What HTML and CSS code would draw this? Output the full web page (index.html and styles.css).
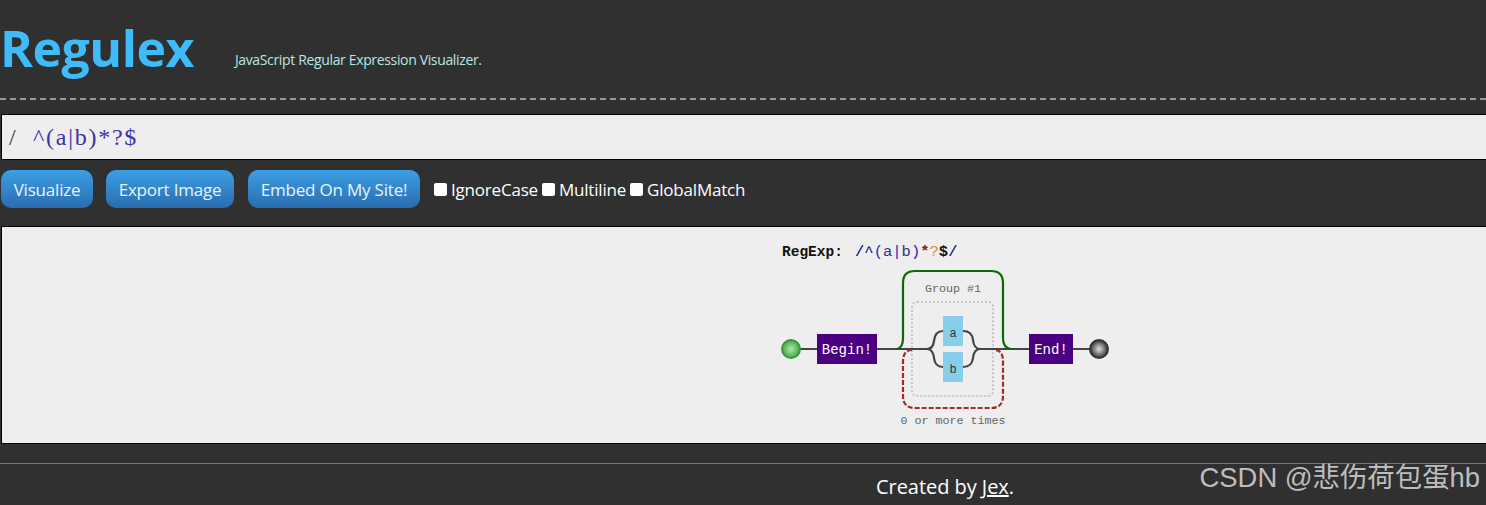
FILE: index.html
```html
<!DOCTYPE html>
<html lang="en">
<head>
<meta charset="utf-8">
<title>Regulex</title>
<link rel="stylesheet" href="styles.css">
</head>
<body>
<header class="header">
  <h1 class="logo">Regulex</h1>
  <span class="tagline">JavaScript Regular Expression Visualizer.</span>
</header>
<div class="input-box"><span class="slash">/</span><span class="regex">^(a|b)*?$</span></div>
<div class="toolbar">
  <button class="btn btn-viz">Visualize</button>
  <button class="btn btn-export">Export Image</button>
  <button class="btn btn-embed">Embed On My Site!</button>
  <label class="opt"><span class="check"></span>IgnoreCase</label>
  <label class="opt"><span class="check"></span>Multiline</label>
  <label class="opt"><span class="check"></span>GlobalMatch</label>
</div>
<main class="canvas">
  <svg class="diagram" width="340" height="217" viewBox="0 0 340 217">
    <defs>
      <radialGradient id="gs"><stop offset="0" stop-color="#b5e6b5"/><stop offset="1" stop-color="#3fa83f"/></radialGradient>
      <radialGradient id="ge"><stop offset="0" stop-color="#e0e0e0"/><stop offset="1" stop-color="#333"/></radialGradient>
    </defs>
    <text class="rx rx-label" x="7" y="30">RegExp:</text>
    <text class="rx rx-src" x="80" y="30"><tspan fill="#000080">/</tspan><tspan fill="#000080">^</tspan><tspan fill="#2a2aaa">(</tspan><tspan fill="#333380">a</tspan><tspan fill="#2a2aaa">|</tspan><tspan fill="#333380">b</tspan><tspan fill="#2a2aaa">)</tspan><tspan fill="#8b1a1a" font-weight="bold">*</tspan><tspan fill="#d98a3c">?</tspan><tspan fill="#111" font-weight="bold">$</tspan><tspan fill="#000080">/</tspan></text>

    <rect class="group-box" x="137" y="76" width="81" height="94" rx="5"/>
    <path class="wire" d="M16 123 H152 M205 123 H323"/>
    <path class="wire" d="M152 123 Q158 123 159 115 Q160 105 168 105 M152 123 Q158 123 159 132 Q160 141 168 141 M188 105 Q197 105 198 114 Q199 123 205 123 M188 141 Q197 141 198 132 Q199 123 205 123"/>
    <path class="loop-top" d="M122 123 Q128 122 128 112 V57 Q128 45 140 45 H216 Q228 45 228 57 V112 Q228 122 236 123"/>
    <path class="loop-bot" d="M137 124 Q128 124 128 136 V170 Q128 182 140 182 H216 Q228 182 228 170 V136 Q228 124 220 124"/>

    <circle cx="16" cy="123" r="9" fill="url(#gs)" stroke="#3a9a3a" stroke-width="2"/>
    <rect class="anchor" x="42" y="108" width="60" height="30"/>
    <text class="node-text" x="72" y="128">Begin!</text>
    <rect class="anchor" x="254" y="108" width="44" height="30"/>
    <text class="node-text" x="276" y="128">End!</text>
    <circle cx="324" cy="123" r="9" fill="url(#ge)" stroke="#333" stroke-width="2"/>

    <rect class="char" x="168" y="90" width="20" height="30"/>
    <text class="char-text" x="178" y="111">a</text>
    <rect class="char" x="168" y="126" width="20" height="30"/>
    <text class="char-text" x="178" y="147">b</text>

    <text class="note" x="178" y="66">Group #1</text>
    <text class="note" x="178" y="198">0 or more times</text>
  </svg>
</main>
<footer class="footer">Created by <a class="link" href="#">Jex</a>.</footer>
<div class="watermark">CSDN @悲伤荷包蛋hb</div>
</body>
</html>
```
FILE: styles.css
```css
* { box-sizing: border-box; }
html, body { margin: 0; height: 505px; overflow: hidden; }
body {
  position: relative;
  background: #303030;
  color: #fff;
  font-family: "Open Sans", "Noto Sans", sans-serif;
}
.header {
  height: 100px;
  display: flex;
  align-items: flex-start;
  border-bottom: 2px dashed #999;
}
.logo {
  margin: 14px 0 0;
  font-size: 50px;
  line-height: 68px;
  font-weight: 700;
  letter-spacing: -0.5px;
  color: #3fbbf8;
}
.tagline {
  margin: 51px 0 0 41px;
  font-size: 14px;
  line-height: 18px;
  letter-spacing: -0.35px;
  color: #b9e5e0;
}
.input-box {
  margin: 14px 0 0 1px;
  height: 46px;
  background: #eee;
  border: 1px solid #000;
  border-right: none;
  padding-left: 7px;
  display: flex;
  align-items: center;
  font-family: "Liberation Serif", serif;
  font-size: 24px;
  color: #3a34a8;
}
.slash { color: #444; width: 24px; }
.regex { letter-spacing: 1.75px; }
.toolbar {
  margin-top: 10px;
  height: 38px;
  display: flex;
  align-items: center;
  padding-left: 1px;
}
.btn {
  height: 38px;
  border: none;
  border-radius: 10px;
  background: linear-gradient(#3c9fe6, #2a6cae);
  color: #e6f4ff;
  font-family: inherit;
  font-size: 17px;
  letter-spacing: -0.2px;
  padding: 0;
}
.btn-viz { width: 92px; }
.btn-export { width: 128px; margin-left: 13px; }
.btn-embed { width: 172px; margin-left: 14px; }
.opt {
  display: flex;
  align-items: center;
  font-size: 17px;
  letter-spacing: -0.2px;
  color: #fff;
  margin-right: 4px;
}
.btn-embed + .opt { margin-left: 14px; }
.check {
  width: 13px;
  height: 13px;
  background: #fff;
  border-radius: 2px;
  margin-right: 4px;
}
.canvas {
  margin: 18px 0 0 1px;
  height: 218px;
  background: #eee;
  border: 1px solid #000;
  border-right: none;
  display: flex;
  justify-content: flex-start;
  padding-left: 773px;
}
.diagram { display: block; flex: none; margin-top: -1px; }
.rx { font-family: "Liberation Mono", monospace; font-size: 14.5px; }
.rx-label { font-weight: 700; fill: #111; }
.rx-src { font-size: 15.5px; }
.wire { fill: none; stroke: #444; stroke-width: 2.2; }
.loop-top { fill: none; stroke: #0a6a0a; stroke-width: 2.2; }
.loop-bot { fill: none; stroke: #a52a2a; stroke-width: 2.2; stroke-dasharray: 5 2; }
.group-box { fill: none; stroke: #bbb; stroke-width: 1.5; stroke-dasharray: 2 2; }
.anchor { fill: #4b0082; }
.node-text { font-family: "Liberation Mono", monospace; font-size: 14px; fill: #fff; text-anchor: middle; }
.char { fill: #87ceeb; }
.char-text { font-family: "Liberation Mono", monospace; font-size: 12px; fill: #334; text-anchor: middle; }
.note { font-family: "Liberation Mono", monospace; font-size: 11.7px; fill: #666; text-anchor: middle; }
.footer {
  margin-top: 19px;
  border-top: 1px solid #777;
  padding: 11px 0 0 876px;
  font-size: 20px;
  line-height: 24px;
  letter-spacing: -0.05px;
  color: #fff;
}
.link { color: #fff; text-decoration: underline; }
.watermark {
  position: absolute;
  right: 6px;
  top: 460px;
  font-family: "Liberation Sans", "Noto Sans CJK SC", sans-serif;
  font-size: 27.4px;
  line-height: 36px;
  color: #bdbdbd;
  white-space: nowrap;
}
```
